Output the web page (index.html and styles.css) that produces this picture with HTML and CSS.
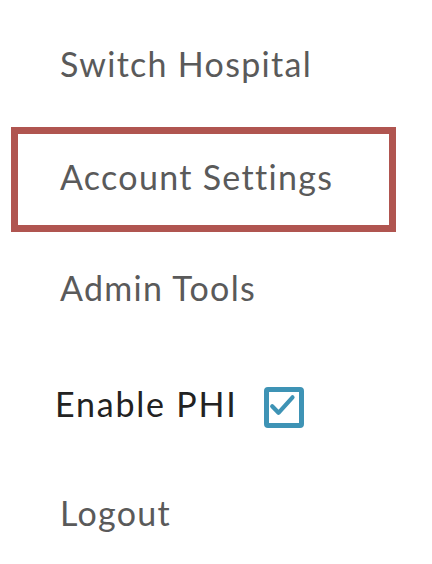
FILE: index.html
```html
<!DOCTYPE html>
<html>
<head>
<meta charset="utf-8">
<link rel="stylesheet" href="styles.css">
</head>
<body>
<nav class="menu">
  <div class="item item-first">Switch Hospital</div>
  <div class="item item-selected">Account Settings</div>
  <div class="item item-admin">Admin Tools</div>
  <div class="item item-phi">
    <span class="phi-label">Enable PHI</span>
    <span class="checkbox">
      <svg width="30" height="31" viewBox="0 0 30 31">
        <path d="M3.2 14.3 L9.5 20.8 L23.5 5.3" fill="none" stroke="#3e93b5" stroke-width="4.2" stroke-linecap="round" stroke-linejoin="round"/>
      </svg>
    </span>
  </div>
  <div class="item item-logout">Logout</div>
</nav>
</body>
</html>
```
FILE: styles.css
```css
html, body {
  margin: 0;
  padding: 0;
  background: #ffffff;
}
.menu {
  display: flex;
  flex-direction: column;
  padding-top: 38px;
  font-family: Lato, "Open Sans", sans-serif;
}
.item {
  height: 50px;
  display: flex;
  align-items: center;
  padding-left: 60px;
  font-size: 34px;
  letter-spacing: 1.3px;
  color: #5a5a5a;
  box-sizing: border-box;
}
.item-selected {
  margin-top: 39px;
  margin-left: 11px;
  width: 385px;
  height: 105px;
  border: 7px solid #b05550;
  padding-left: 42px;
  padding-bottom: 6px;
}
.item-admin {
  margin-top: 30px;
}
.item-phi {
  margin-top: 66px;
  padding-left: 55px;
  color: #222222;
  letter-spacing: 1.8px;
}
.checkbox {
  margin-left: 26px;
  margin-top: 8px;
  width: 40px;
  height: 41px;
  box-sizing: border-box;
  border: 5px solid #3e93b5;
  border-radius: 4px;
  display: flex;
}
.item-logout {
  margin-top: 59px;
}
```
